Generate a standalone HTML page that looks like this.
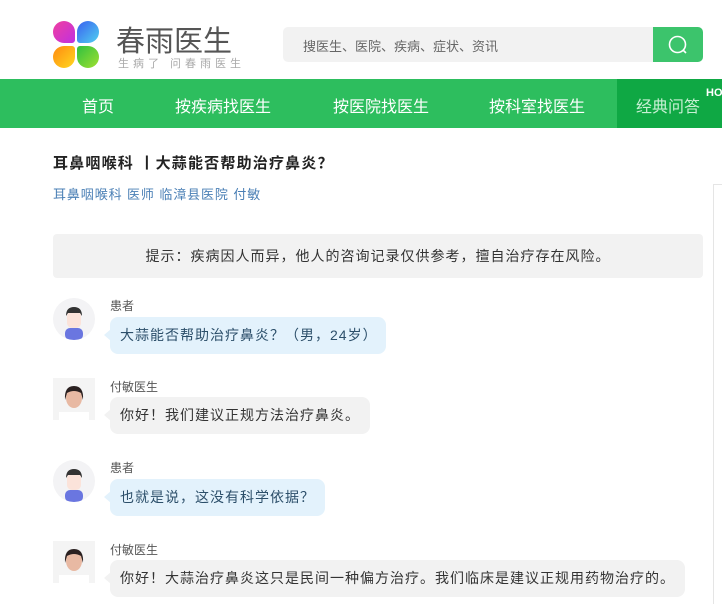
<!DOCTYPE html>
<html><head><meta charset="utf-8"><style>
*{margin:0;padding:0;box-sizing:border-box}
body{width:722px;height:596px;overflow:hidden;background:#fff;font-family:"Liberation Sans","Noto Sans CJK SC",sans-serif;position:relative;color:#333}
.a{position:absolute}
.p{position:absolute;width:22px;height:22px}
.nav{top:79px;left:0;width:722px;height:49px;background:#2dbe5e}
.nav span{position:absolute;top:14px;color:#fff;font-size:16px;transform:translateX(-50%);white-space:nowrap}
.lbl{font-size:12px;color:#555;left:110px}
.b{left:110px;height:37px;border-radius:8px;font-size:14px;line-height:37px;padding:0 10px;white-space:nowrap;letter-spacing:1px}
.b:before{content:"";position:absolute;left:-6px;top:12px;border-right:7px solid;border-top:6px solid transparent;border-bottom:6px solid transparent;border-right-color:inherit}
.u{background:#e3f2fc;border-color:#e3f2fc;color:#2c4f6a}
.d{background:#f2f2f2;border-color:#f2f2f2;color:#333}
.av{left:53px;width:42px;height:42px}
.pa{border-radius:50%;background:#f3f3f5;overflow:hidden}
.doc{background:#f4f4f4}
</style></head><body>
<div class="p" style="left:53px;top:21px;border-radius:11px 11px 3px 11px;background:linear-gradient(135deg,#f040a0,#c030e0)"></div>
<div class="p" style="left:77px;top:21px;border-radius:11px 11px 11px 3px;background:linear-gradient(135deg,#3a60f0,#50d0f0)"></div>
<div class="p" style="left:53px;top:46px;border-radius:11px 3px 11px 11px;background:linear-gradient(135deg,#ff8a10,#ffd820)"></div>
<div class="p" style="left:77px;top:46px;border-radius:3px 11px 11px 11px;background:linear-gradient(135deg,#30c040,#a0e030)"></div>
<div class="a" style="left:116px;top:18px;font-size:29px;color:#555">春雨医生</div>
<div class="a" style="left:118px;top:55px;font-size:11px;color:#aaa;letter-spacing:4px">生病了 问春雨医生</div>
<div class="a" style="left:283px;top:27px;width:375px;height:35px;background:#f2f2f2;border-radius:5px 0 0 5px"></div>
<div class="a" style="left:303px;top:36px;font-size:13px;color:#666">搜医生、医院、疾病、症状、资讯</div>
<div class="a" style="left:653px;top:27px;width:50px;height:35px;background:#3cc46c;border-radius:0 5px 5px 0"></div>
<svg class="a" style="left:666px;top:33px" width="24" height="24" viewBox="0 0 24 24"><circle cx="11.5" cy="11.5" r="8" fill="none" stroke="#fff" stroke-width="1.6"/><path d="M17 17l3 3" stroke="#fff" stroke-width="1.6"/></svg>
<div class="a nav">
<span style="left:98px">首页</span><span style="left:223px">按疾病找医生</span><span style="left:381px">按医院找医生</span><span style="left:537px">按科室找医生</span>
<div class="a" style="left:617px;top:0;width:105px;height:49px;background:#0fa844"></div>
<span style="left:668px;color:#c8f0d4">经典问答</span>
<div class="a" style="left:706px;top:8px;font-size:11px;font-weight:bold;color:#fff">HO</div>
</div>
<div class="a" style="left:53px;top:152px;font-size:15px;font-weight:bold;color:#222;letter-spacing:1.2px">耳鼻咽喉科 丨大蒜能否帮助治疗鼻炎？</div>
<div class="a" style="left:53px;top:184px;font-size:13px;color:#4a7fb5;letter-spacing:0.9px">耳鼻咽喉科 医师 临漳县医院 付敏</div>
<div class="a" style="left:713px;top:184px;width:9px;height:420px;border-left:1px solid #e5e5e5;border-top:1px solid #e5e5e5"></div>
<div class="a" style="left:53px;top:234px;width:650px;height:44px;background:#f2f2f2;border-radius:4px;text-align:center;line-height:44px;font-size:14px;color:#333;letter-spacing:1px">提示：疾病因人而异，他人的咨询记录仅供参考，擅自治疗存在风险。</div>

<div class="a av pa" style="top:298px"><svg width="42" height="42"><rect x="12" y="30" width="18" height="12" rx="5" fill="#6a76e0"/><rect x="14" y="13" width="14" height="17" rx="5" fill="#fbe3da"/><path d="M13 18 Q13 9 21 9 Q29 9 29 18 L27 15 L15 15Z" fill="#333"/></svg></div>
<div class="a lbl" style="top:297px">患者</div>
<div class="a b u" style="top:317px;width:276px">大蒜能否帮助治疗鼻炎？（男，24岁）</div>

<div class="a av doc" style="top:378px"><svg width="42" height="42"><rect x="6" y="34" width="30" height="8" fill="#fff"/><ellipse cx="21" cy="20" rx="8" ry="10" fill="#e8b9a3"/><path d="M12 22 Q11 8 21 8 Q31 8 30 22 L28 15 Q21 11 14 15Z" fill="#2a2020"/></svg></div>
<div class="a lbl" style="top:378px">付敏医生</div>
<div class="a b d" style="top:397px;width:260px">你好！我们建议正规方法治疗鼻炎。</div>

<div class="a av pa" style="top:460px"><svg width="42" height="42"><rect x="12" y="30" width="18" height="12" rx="5" fill="#6a76e0"/><rect x="14" y="13" width="14" height="17" rx="5" fill="#fbe3da"/><path d="M13 18 Q13 9 21 9 Q29 9 29 18 L27 15 L15 15Z" fill="#333"/></svg></div>
<div class="a lbl" style="top:459px">患者</div>
<div class="a b u" style="top:479px;width:215px">也就是说，这没有科学依据？</div>

<div class="a av doc" style="top:541px"><svg width="42" height="42"><rect x="6" y="34" width="30" height="8" fill="#fff"/><ellipse cx="21" cy="20" rx="8" ry="10" fill="#e8b9a3"/><path d="M12 22 Q11 8 21 8 Q31 8 30 22 L28 15 Q21 11 14 15Z" fill="#2a2020"/></svg></div>
<div class="a lbl" style="top:541px">付敏医生</div>
<div class="a b d" style="top:560px;width:575px">你好！大蒜治疗鼻炎这只是民间一种偏方治疗。我们临床是建议正规用药物治疗的。</div>
</body></html>
